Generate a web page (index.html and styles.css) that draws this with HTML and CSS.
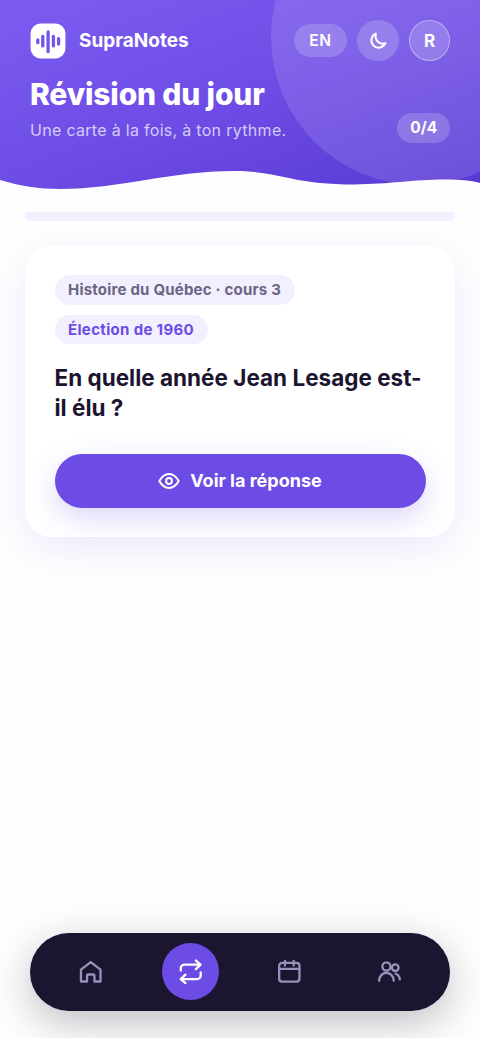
FILE: index.html
```html
<!DOCTYPE html>
<html lang="fr">
<head>
<meta charset="utf-8">
<meta name="viewport" content="width=device-width, initial-scale=1">
<title>SupraNotes</title>
<link rel="stylesheet" href="styles.css">
</head>
<body>
<div class="app">
  <header class="hero">
    <div class="orb"></div>
    <svg class="wave" viewBox="0 0 480 30" preserveAspectRatio="none"><path d="M0 14C20 20 39 23 60 23C120 23 170 5 234 5C281 5 290 18.4 354 18.4C390 18.4 412 13.6 446 13.6C460 13.6 470 14.5 480 17V30H0Z"/></svg>
    <div class="topbar">
      <svg class="logo" viewBox="0 0 36 36"><rect x=".6" y=".6" width="34.8" height="34.8" rx="10"/><path d="M7.8 16.9v2.8M12.8 13.5v9.4M18.1 8.9v19.8M23.4 13.5v9.4M28.6 15.7v5.4"/></svg>
      <span class="brand">SupraNotes</span>
      <button class="lang">EN</button>
      <button class="round"><svg class="moon" viewBox="0 0 18 18"><path d="M6.9 1.6A7.3 7.3 0 1 0 16.4 11.2C11 13.2 5 8.6 6.9 1.6Z"/></svg></button>
      <button class="round avatar">R</button>
    </div>
    <div class="heading">
      <div>
        <h1>Révision du jour</h1>
        <p>Une carte à la fois, à ton rythme.</p>
      </div>
      <span class="count">0/4</span>
    </div>
  </header>
  <main class="content">
    <div class="progress"></div>
    <section class="card">
      <div class="chips">
        <span class="chip course">Histoire du Québec · cours 3</span>
        <span class="chip topic">Élection de 1960</span>
      </div>
      <h2>En quelle année Jean Lesage est-<br>il élu ?</h2>
      <button class="reveal">
        <svg viewBox="0 0 22 18"><path d="M1.3 9C3.8 4.6 7 2 11 2S18.2 4.6 20.7 9C18.2 13.4 15 16 11 16S3.8 13.4 1.3 9Z"/><circle cx="11" cy="9" r="2.9"/></svg>
        <span>Voir la réponse</span>
      </button>
    </section>
  </main>
  <nav class="tabs">
    <a class="tab"><svg viewBox="0 0 28 28"><path d="M4.1 12 14.2 4.2 24.4 12v12.4h-6.3v-6a1.3 1.3 0 0 0-1.3-1.3h-5.1a1.3 1.3 0 0 0-1.3 1.3v6H4.1Z"/></svg></a>
    <a class="tab active"><svg viewBox="0 0 28 28"><path d="M3.9 13v-2.3a3.8 3.8 0 0 1 3.8-3.8h16.6M19.6 2.6l4.8 4.3-4.8 4.6M24.6 15v3.1a3.8 3.8 0 0 1-3.8 3.8H4M8.8 17.3l-4.9 4.6 4.9 4.1"/></svg></a>
    <a class="tab"><svg viewBox="0 0 28 28"><rect x="3.3" y="5.1" width="21" height="19.4" rx="3"/><path d="M3.3 11.2h21M9.3 3v4.8M18.3 3v4.8"/></svg></a>
    <a class="tab"><svg viewBox="0 0 28 28"><circle cx="10.8" cy="8.8" r="4.2"/><path d="M3.3 23.6V23a7.3 7.3 0 0 1 15 0v.6M20.4 16.3a7 7 0 0 1 4.3 5.8"/><circle cx="20" cy="10.1" r="3.4"/></svg></a>
  </nav>
</div>
</body>
</html>
```
FILE: styles.css
```css
* { box-sizing: border-box; }
body { margin: 0; font-family: Inter, "Open Sans", sans-serif; background: #fefefe; color: #1c1530; }
button { border: 0; padding: 0; font: inherit; color: inherit; }
h1, h2, p { margin: 0; }
svg { flex: none; fill: none; stroke: currentColor; stroke-linecap: round; stroke-linejoin: round; }
.app { height: 1038px; display: flex; flex-direction: column; overflow: hidden; }
.hero { position: relative; height: 195px; overflow: hidden; color: #fff; background: linear-gradient(160deg, #7c5cf0 0%, #6d4ce5 52%, #5737d3 100%); padding: 19.5px 29.7px 0 30px; }
.orb { position: absolute; left: 271px; top: -111px; width: 296px; height: 296px; border-radius: 50%; background: rgba(255,255,255,.12); }
.wave { position: absolute; left: 0; top: 166px; width: 480px; height: 30px; fill: #fefefe; stroke: none; }
.topbar { position: relative; display: flex; align-items: center; height: 42px; }
.logo { width: 36px; height: 36px; stroke: #7554e8; stroke-width: 3.3; }
.logo rect { fill: #fff; stroke: none; }
.brand { margin: 0 auto 0 13px; font-size: 19px; font-weight: 700; }
.lang { width: 53px; height: 33px; border-radius: 17px; background: rgba(255,255,255,.18); font-size: 15.5px; font-weight: 600; letter-spacing: .7px; }
.round { width: 41.7px; height: 41.7px; margin-left: 10px; border-radius: 50%; background: rgba(255,255,255,.18); display: flex; align-items: center; justify-content: center; }
.moon { width: 18px; height: 18px; stroke-width: 2; }
.avatar { border: 1.3px solid rgba(255,255,255,.38); font-size: 17px; font-weight: 700; }
.heading { position: relative; display: flex; justify-content: space-between; align-items: flex-end; margin-top: 14.5px; }
h1 { font-size: 30px; line-height: 36px; font-weight: 800; letter-spacing: -.17px; white-space: nowrap; }
.heading p { margin-top: 6px; font-size: 16px; line-height: 24px; letter-spacing: .3px; color: rgba(255,255,255,.72); white-space: nowrap; }
.count { width: 53px; height: 30px; line-height: 30px; border-radius: 15px; text-align: center; background: rgba(255,255,255,.18); font-size: 15.5px; font-weight: 700; margin-bottom: -.8px; }
.content { flex: 1; padding: 17px 25px 0; }
.progress { height: 9px; border-radius: 5px; background: #f2effe; }
.card { margin-top: 25px; height: 291px; padding: 29px 29.5px 0; border-radius: 27px; background: #fff; box-shadow: 0 12px 40px rgba(109,76,229,.11); }
.chips { display: flex; flex-direction: column; align-items: flex-start; gap: 10px; }
.chip { height: 29.5px; line-height: 29.5px; border-radius: 15px; background: #f2effe; padding-left: 13.5px; font-size: 15px; font-weight: 700; white-space: nowrap; }
.course { width: 240.5px; color: #6c6584; letter-spacing: .21px; }
.topic { width: 153.5px; color: #6d4ce5; letter-spacing: .34px; }
h2 { margin-top: 19px; font-size: 22.5px; line-height: 29.5px; font-weight: 700; white-space: nowrap; }
.reveal { width: 100%; height: 53.5px; margin-top: 32px; border-radius: 27px; background: #6d4ce5; color: #fff; display: flex; align-items: center; justify-content: center; gap: 10px; font-size: 18px; font-weight: 700; box-shadow: 0 10px 28px rgba(109,76,229,.23); }
.reveal svg { width: 22px; height: 18px; stroke-width: 2; }
.tabs { height: 78px; margin: 0 30px 27.5px; padding: 0 11px; border-radius: 39px; background: #1c1530; display: flex; box-shadow: 0 12px 40px rgba(28,21,48,.28); }
.tab { flex: 1; display: flex; align-items: center; justify-content: center; color: #9990bd; }
.tab svg { width: 27px; height: 27px; stroke-width: 2.4; }
.active { color: #fff; flex: none; width: 57px; height: 57px; margin: 10.5px 21.25px; border-radius: 50%; background: #6d4ce5; }
```
